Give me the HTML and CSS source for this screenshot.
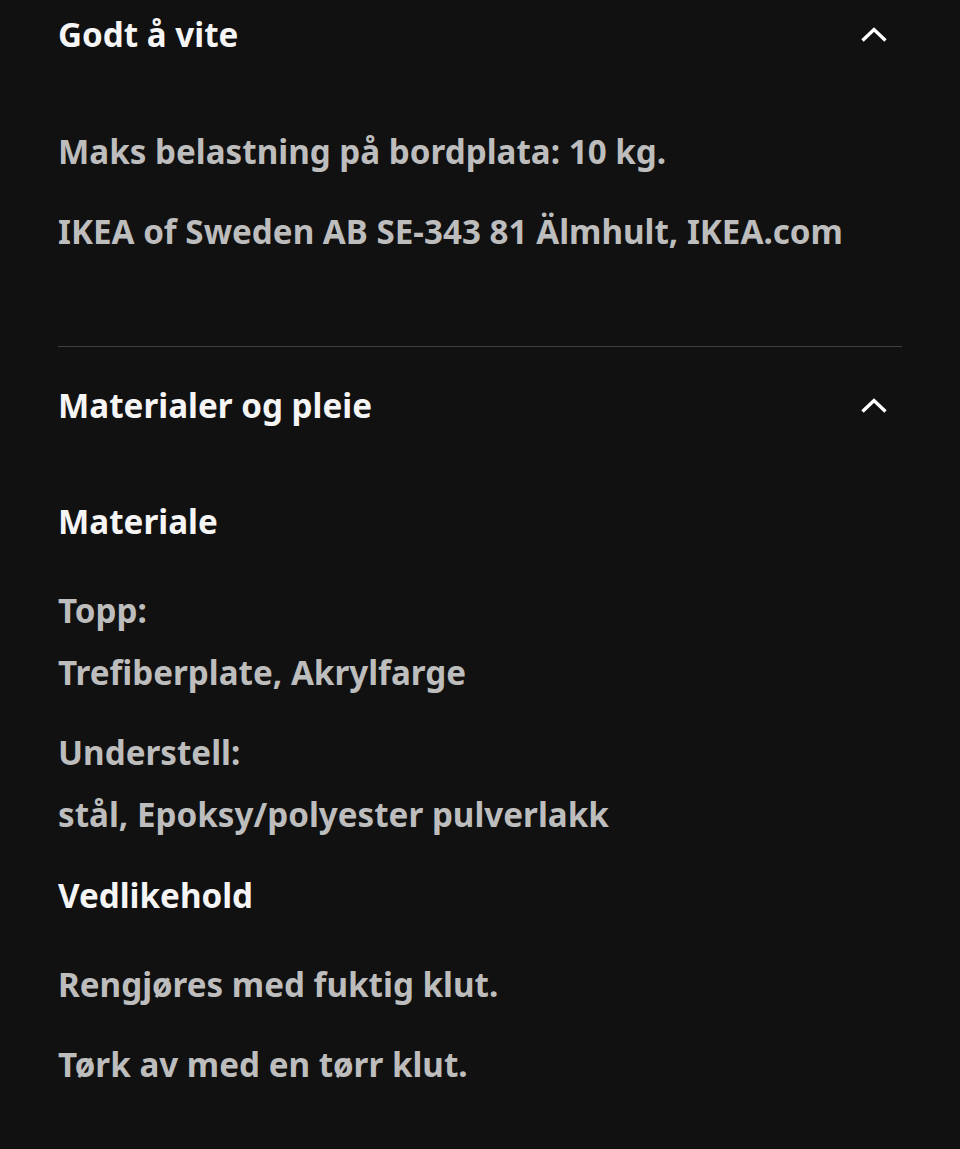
FILE: index.html
```html
<!DOCTYPE html>
<html lang="no">
<head>
	<meta charset="utf-8">
	<title>Produktinformasjon</title>
	<link rel="stylesheet" href="styles.css">
</head>
<body>
<div class="page">

    <section class="accordion">
        <div class="accordion-head">
            <h2>Godt å vite</h2>
            <svg class="chevron" width="28" height="16" viewBox="0 0 28 16"><path d="M2.5 13.5 L14 2.5 L25.5 13.5"/></svg>
        </div>
        <div class="accordion-body first">
            <p>Maks belastning på bordplata: 10 kg.</p>
            <p class="gap">IKEA of Sweden AB SE-343 81 Älmhult, IKEA.com</p>
        </div>
    </section>

    <section class="accordion bordered">
        <div class="accordion-head">
            <h2>Materialer og pleie</h2>
            <svg class="chevron" width="28" height="16" viewBox="0 0 28 16"><path d="M2.5 13.5 L14 2.5 L25.5 13.5"/></svg>
        </div>
        <div class="accordion-body">
            <h3>Materiale</h3>
            <p class="label">Topp:</p>
            <p class="value">Trefiberplate, Akrylfarge</p>
            <p class="label gap">Understell:</p>
            <p class="value">stål, Epoksy/polyester pulverlakk</p>
            <h3 class="gap">Vedlikehold</h3>
            <p class="label">Rengjøres med fuktig klut.</p>
            <p class="gap">Tørk av med en tørr klut.</p>
        </div>
    </section>

</div>
</body>
</html>
```

FILE: styles.css
```css
* {
	margin: 0;
	padding: 0;
	box-sizing: border-box;
}

body {
	background-color: #111111;
	font-family: "Noto Sans", "Open Sans", sans-serif;
	font-size: 33.2px;
	line-height: 40px;
	font-weight: 700;
	color: #bdbdbd;
}

.page {
	padding: 15px 58px 0;
}

.accordion.bordered {
	border-top: 1px solid #3f3f3f;
	padding-top: 39px;
}

.accordion-head {
	display: flex;
	align-items: center;
	justify-content: space-between;
	height: 40px;
}

.accordion-head h2,
.accordion-body h3 {
	font-size: 33.2px;
	font-weight: 700;
	color: #f5f5f5;
}

.chevron {
	margin-right: 14px;
	fill: none;
	stroke: #ffffff;
	stroke-width: 3.4;
}

.accordion-body {
	padding-top: 76px;
}

.accordion-body.first {
	padding-top: 77px;
	padding-bottom: 94px;
}

.accordion-body .gap {
	margin-top: 41px;
}

.accordion-body .label {
	margin-top: 49px;
}

.accordion-body .label.gap {
	margin-top: 40px;
}

.accordion-body .value {
	margin-top: 22px;
}

.accordion-body p:last-child {
	margin-top: 40px;
}
```
